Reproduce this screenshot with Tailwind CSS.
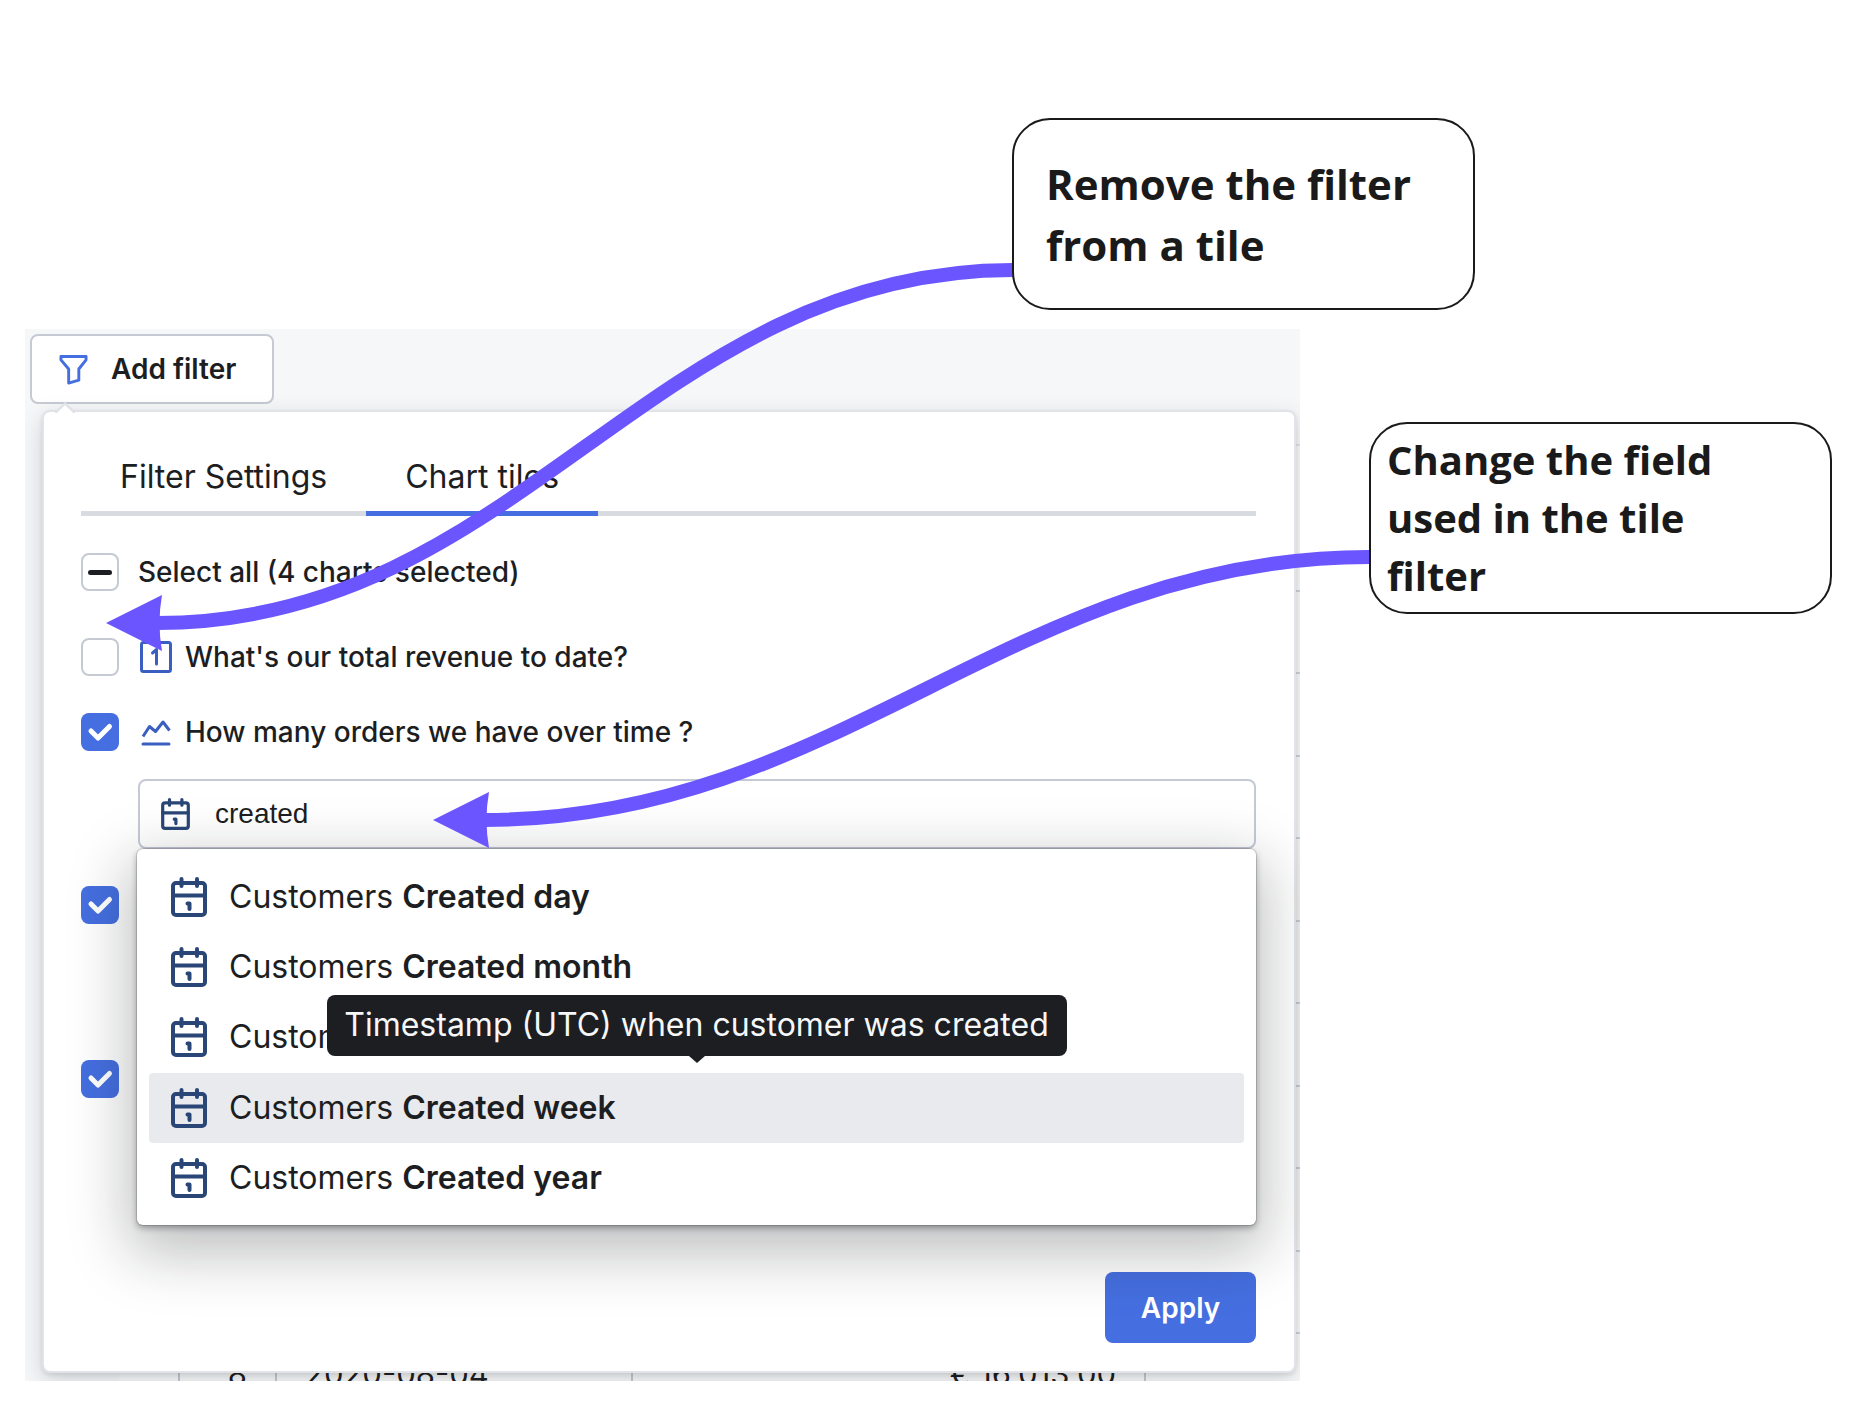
<!DOCTYPE html>
<html lang="en">
  <head>
    <meta charset="utf-8" />
    <title>Dashboard filter: chart tiles</title>
    <script src="https://cdn.jsdelivr.net/npm/@tailwindcss/browser@4"></script>
  </head>
  <body class="bg-white font-['Inter',sans-serif] text-[#1c1e22]">
    <svg class="hidden">
      <symbol id="calendar" viewBox="0 0 36 40" fill="none" stroke="#294676" stroke-width="4" stroke-linecap="round" stroke-linejoin="round">
        <rect x="2" y="6" width="32" height="32" rx="3" />
        <path d="M2 18.500h32" />
        <path d="M10.500 2v7M26 2v7M16.500 26.500h2V32" />
      </symbol>
      <symbol id="check" viewBox="0 0 38 38" fill="none" stroke="#fff" stroke-width="5" stroke-linecap="round" stroke-linejoin="round">
        <path d="M10 18l7 7L28.500 13.500" />
      </symbol>
    </svg>

    <main class="relative min-h-[1416px] overflow-hidden pt-[329px] pl-[25px]">
      <section class="relative max-w-[1275px] h-[1052px] overflow-hidden bg-[#f5f7f9] pt-[5px] pl-[5px] pr-[4px]">
        <!-- results table behind the popover -->
        <div class="absolute top-[115px] left-[94px] right-0 h-[980px] border-t-2 border-[#e1e3e8] bg-[#f9fafb]">
          <div class="mt-[144px] grid h-[744px] grid-rows-9 border-t-2 border-[#cfd3da]">
            <div class="border-b-2 border-[#cfd3da]"></div>
            <div class="border-b-2 border-[#cfd3da]"></div>
            <div class="border-b-2 border-[#cfd3da]"></div>
            <div class="border-b-2 border-[#cfd3da]"></div>
            <div class="border-b-2 border-[#cfd3da]"></div>
            <div class="border-b-2 border-[#cfd3da]"></div>
            <div class="border-b-2 border-[#cfd3da]"></div>
            <div class="border-b-2 border-[#cfd3da]"></div>
            <div class="border-b-2 border-[#cfd3da]"></div>
          </div>
          <table class="ml-[59px] h-[80px] table-fixed border-collapse text-[31px] leading-[40px]">
            <tr>
              <td class="w-[97px] border-x-2 border-[#c5cad3] pr-[28px] text-right">8</td>
              <td class="w-[356px] border-x-2 border-[#c5cad3] pl-[28px]">2020-08-04</td>
              <td class="w-[513px] border-x-2 border-[#c5cad3] pr-[28px] text-right">€ 16,013.00</td>
            </tr>
          </table>
        </div>

        <button class="relative flex h-[70px] w-[244px] items-center rounded-lg border-2 border-[#c5cad3] bg-white pl-[27px] text-[28px] font-semibold">
          <svg class="mr-[23px] h-[31px] w-[29px]" viewBox="0 0 30 31" fill="none" stroke="#456fe0" stroke-width="3" stroke-linejoin="round">
            <path d="M2 2h26v3.500l-7.500 9.500v11.500L10 29.500V15L2 5.500z" />
          </svg>
          Add filter
        </button>

        <div class="relative mt-[6px] ml-[12px] h-[963px] rounded-lg border-2 border-[#e1e3e8] bg-white pr-[38px] pl-[37px] pt-[30px] shadow-[0_2px_4px_rgba(17,20,24,0.10),0_8px_24px_rgba(17,20,24,0.16)]">
          <svg class="absolute -top-[10px] left-[11px] h-[11px] w-[20px]" viewBox="0 0 20 11">
            <path d="M0 9l10-9 10 9v2H0z" fill="#e1e3e8" />
            <path d="M2 11l8-8 8 8z" fill="#fff" />
          </svg>

          <div class="flex border-b-[5px] border-[#d8dbe0] text-[32px]" role="tablist">
            <button role="tab" class="-mb-[5px] h-[74px] border-b-[5px] border-transparent px-[39px]">Filter Settings</button>
            <button role="tab" aria-selected="true" class="-mb-[5px] h-[74px] border-b-[5px] border-[#456fe0] px-[39px]">Chart tiles</button>
          </div>

          <label class="mt-[37px] flex h-[38px] items-center text-[28px] font-medium">
            <span class="mr-[19px] grid size-[38px]">
              <input type="checkbox" class="col-start-1 row-start-1 size-[38px] appearance-none rounded-lg border-2 border-[#c5c9d2] bg-white" />
              <span class="col-start-1 row-start-1 h-[5px] w-[24px] place-self-center rounded-full bg-[#1c1e22]"></span>
            </span>
            Select all (4 charts selected)
          </label>

          <label class="mt-[47px] flex h-[38px] items-center text-[28px] font-medium">
            <input type="checkbox" class="size-[38px] appearance-none rounded-lg border-2 border-[#c5c9d2] bg-white" />
            <svg class="mr-[13px] ml-[21px] size-[32px]" viewBox="0 0 32 32" fill="none" stroke="#3a5fc0" stroke-width="3" stroke-linecap="round" stroke-linejoin="round">
              <rect x="1.500" y="1.500" width="29" height="29" rx="2" />
              <path d="M12.500 12l4-3.500V23" />
            </svg>
            What's our total revenue to date?
          </label>

          <label class="mt-[37px] flex h-[38px] items-center text-[28px] font-medium">
            <span class="grid size-[38px]">
              <input type="checkbox" checked class="col-start-1 row-start-1 size-[38px] appearance-none rounded-lg bg-[#456fe0]" />
              <svg class="col-start-1 row-start-1 size-[38px]"><use href="#check" /></svg>
            </span>
            <svg class="mr-[13px] ml-[21px] size-[32px]" viewBox="0 0 32 32" fill="none" stroke="#3a5fc0" stroke-width="3">
              <path d="M3 20.500L9.500 10.500l6 5L23 6l6.500 8.500" stroke-linejoin="round" />
              <path d="M3 28h26" stroke-linecap="round" />
            </svg>
            How many orders we have over time ?
          </label>

          <div class="relative mt-[28px] ml-[57px]">
            <div class="flex h-[70px] items-center rounded-lg border-2 border-[#c5c9d6] bg-white pl-[21px]">
              <svg class="h-[32px] w-[29px]"><use href="#calendar" /></svg>
              <input type="text" aria-label="Field" value="created" class="ml-[25px] flex-1 bg-transparent font-['Liberation_Sans',sans-serif] text-[28px] outline-none" />
            </div>

            <ul class="absolute top-[70px] right-0 -left-[1px] z-10 grid h-[376px] grid-rows-5 rounded-md bg-white px-[12px] pt-[13px] pb-[12px] text-[32px] shadow-[0_0_0_1px_rgba(17,20,24,0.15),0_3px_6px_rgba(17,20,24,0.35),0_20px_60px_8px_rgba(17,20,24,0.28)]">
              <li class="flex items-center rounded px-[22px]">
                <svg class="mr-[22px] h-[40px] w-[36px]"><use href="#calendar" /></svg>
                <span>Customers <b class="font-semibold">Created day</b></span>
              </li>
              <li class="flex items-center rounded px-[22px]">
                <svg class="mr-[22px] h-[40px] w-[36px]"><use href="#calendar" /></svg>
                <span>Customers <b class="font-semibold">Created month</b></span>
              </li>
              <li class="flex items-center rounded px-[22px]">
                <svg class="mr-[22px] h-[40px] w-[36px]"><use href="#calendar" /></svg>
                <span>Customers</span>
              </li>
              <li class="relative flex items-center rounded bg-[#e9eaee] px-[22px]">
                <svg class="mr-[22px] h-[40px] w-[36px]"><use href="#calendar" /></svg>
                <span>Customers <b class="font-semibold">Created week</b></span>
                <div role="tooltip" class="absolute bottom-[87px] left-1/2 flex h-[61px] w-[740px] -translate-x-1/2 items-center justify-center rounded-lg bg-[#1c1e22] whitespace-nowrap text-[#f6f7f9]">
                  Timestamp (UTC) when customer was created
                  <svg class="absolute top-full left-1/2 h-[7px] w-[16px] -translate-x-1/2" viewBox="0 0 16 7"><path d="M0 0h16L8 7z" fill="#1c1e22" /></svg>
                </div>
              </li>
              <li class="flex items-center rounded px-[22px]">
                <svg class="mr-[22px] h-[40px] w-[36px]"><use href="#calendar" /></svg>
                <span>Customers <b class="font-semibold">Created year</b></span>
              </li>
            </ul>
          </div>

          <label class="mt-[37px] grid size-[38px]" aria-label="Chart tile 3">
            <input type="checkbox" checked class="col-start-1 row-start-1 size-[38px] appearance-none rounded-lg bg-[#456fe0]" />
            <svg class="col-start-1 row-start-1 size-[38px]"><use href="#check" /></svg>
          </label>
          <label class="mt-[136px] grid size-[38px]" aria-label="Chart tile 4">
            <input type="checkbox" checked class="col-start-1 row-start-1 size-[38px] appearance-none rounded-lg bg-[#456fe0]" />
            <svg class="col-start-1 row-start-1 size-[38px]"><use href="#check" /></svg>
          </label>

          <div class="mt-[174px] flex justify-end">
            <button class="h-[71px] w-[151px] rounded-lg bg-[#456fe0] text-[28px] font-semibold text-white">Apply</button>
          </div>
        </div>
      </section>

      <!-- annotations -->
      <svg class="pointer-events-none absolute top-0 left-0 z-20 h-[1416px] w-[1868px]" viewBox="0 0 1868 1416" fill="none" stroke="#6a55ff" stroke-width="14">
        <path d="M1013 270C652 270 519 623 157 623" />
        <path d="M1369 557C1014 557 840 820 484 820" />
        <g fill="#6a55ff" stroke="none">
          <path d="M106 623l56-28q-5 28 0 56z" />
          <path d="M433 820l56-28q-5 28 0 56z" />
        </g>
      </svg>
      <p class="absolute top-[118px] left-[1012px] z-20 flex h-[192px] w-[463px] items-center rounded-[38px] border-2 border-[#1a1a1a] bg-white pl-[32px] font-['Open_Sans',sans-serif] text-[42px] leading-[61px] font-bold text-[#1a1a1a]">Remove the filter<br />from a tile</p>
      <p class="absolute top-[422px] left-[1369px] z-20 flex h-[192px] w-[463px] items-center rounded-[38px] border-2 border-[#1a1a1a] bg-white pl-[16px] font-['Open_Sans',sans-serif] text-[40px] leading-[58px] font-bold text-[#1a1a1a]">Change the field<br />used in the tile<br />filter</p>
    </main>
  </body>
</html>
